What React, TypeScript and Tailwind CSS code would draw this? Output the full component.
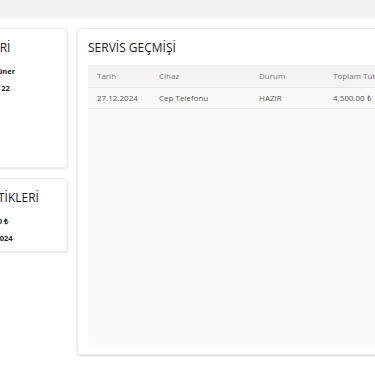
const rows = [
  { date: "27.12.2024", device: "Cep Telefonu", status: "HAZIR", total: "4,500.00 ₺" },
];

function InfoCard({ title, lines, h }: { title: string; lines: string[]; h: string }) {
  return (
    <div className={`bg-white rounded border border-[#ececec] shadow-[0_1px_2px_rgba(0,0,0,0.12)] px-[11px] pt-[10px] ${h}`}>
      <h3 className="text-[12px] font-medium text-[#1c1c1c] whitespace-nowrap leading-[18px]">{title}</h3>
      <div className="mt-[9px] flex flex-col gap-[7px]">
        {lines.map((l, i) => (
          <p key={i} className="text-[7.5px] font-bold text-[#222] whitespace-nowrap leading-[10px]">
            {l}
          </p>
        ))}
      </div>
    </div>
  );
}

export default function App() {
  return (
    <div className="w-[375px] h-[366px] overflow-hidden bg-white font-['Open_Sans',sans-serif]">
      <div className="h-[18px] bg-[#f1f1f1]" />
      <div className="flex gap-[9px] pt-[10px]">
        <div className="w-[176px] shrink-0 -ml-[108px] flex flex-col gap-[10px]">
          <InfoCard
            title="MÜŞTERİ BİLGİLERİ"
            lines={["Adı Soyadı: Mehmet Ali Güner", "Cep Telefonu: 0532 412 22 22"]}
            h="h-[140px]"
          />
          <InfoCard
            title="MÜŞTERİ İSTATİSTİKLERİ"
            lines={["Toplam Harcama: 4,500.00 ₺", "Son Ziyaret Tarihi: 27.12.2024"]}
            h="h-[74px]"
          />
        </div>
        <div className="w-[340px] shrink-0 h-[327px] bg-white rounded border border-[#ececec] shadow-[0_1px_2px_rgba(0,0,0,0.18)] px-[10px] pt-[10px] pb-[9px] flex flex-col">
          <h2 className="text-[12px] font-medium text-[#1c1c1c] leading-[18px]">SERVİS GEÇMİŞİ</h2>
          <div className="mt-[8px] flex-1 bg-[#fafafa] rounded-sm">
            <div className="grid grid-cols-[62px_100px_74px_1fr] h-[23px] items-center bg-[#f4f4f4] border-b border-[#e6e6e6] text-[8px] text-[#777] px-[9px]">
              <span>Tarih</span>
              <span>Cihaz</span>
              <span>Durum</span>
              <span className="whitespace-nowrap">Toplam Tutar</span>
            </div>
            {rows.map((r, i) => (
              <div
                key={i}
                className="grid grid-cols-[62px_100px_74px_1fr] h-[21px] items-center border-b border-[#e6e6e6] text-[8px] text-[#555] px-[9px]"
              >
                <span>{r.date}</span>
                <span>{r.device}</span>
                <span>{r.status}</span>
                <span className="whitespace-nowrap">{r.total}</span>
              </div>
            ))}
          </div>
        </div>
      </div>
    </div>
  );
}
